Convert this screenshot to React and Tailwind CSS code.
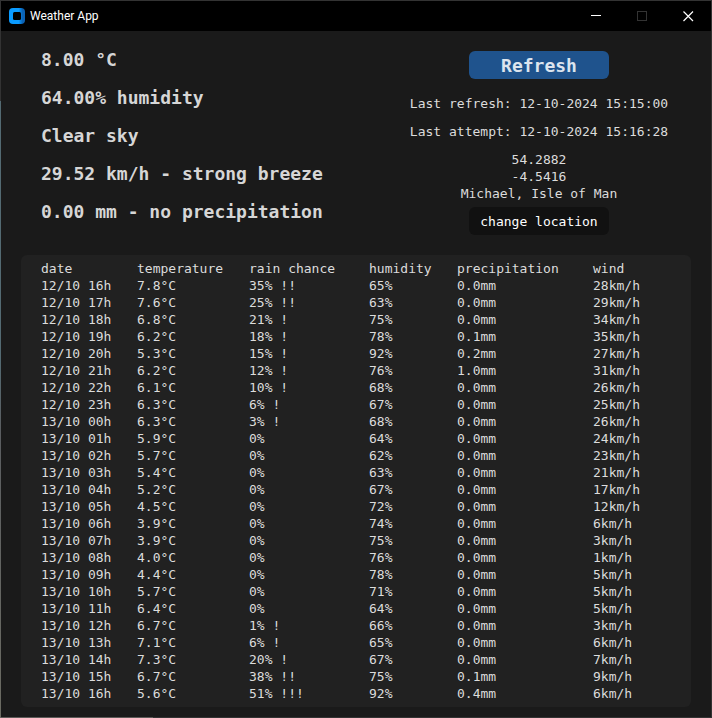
const current = [
  "8.00 °C",
  "64.00% humidity",
  "Clear sky",
  "29.52 km/h - strong breeze",
  "0.00 mm - no precipitation",
];

const columns = [
  { label: "date", width: "w-[96px]" },
  { label: "temperature", width: "w-[112px]" },
  { label: "rain chance", width: "w-[120px]" },
  { label: "humidity", width: "w-[88px]" },
  { label: "precipitation", width: "w-[136px]" },
  { label: "wind", width: "" },
];

const forecast = [
  ["12/10 16h", "7.8°C", "35% !!", "65%", "0.0mm", "28km/h"],
  ["12/10 17h", "7.6°C", "25% !!", "63%", "0.0mm", "29km/h"],
  ["12/10 18h", "6.8°C", "21% !", "75%", "0.0mm", "34km/h"],
  ["12/10 19h", "6.2°C", "18% !", "78%", "0.1mm", "35km/h"],
  ["12/10 20h", "5.3°C", "15% !", "92%", "0.2mm", "27km/h"],
  ["12/10 21h", "6.2°C", "12% !", "76%", "1.0mm", "31km/h"],
  ["12/10 22h", "6.1°C", "10% !", "68%", "0.0mm", "26km/h"],
  ["12/10 23h", "6.3°C", "6% !", "67%", "0.0mm", "25km/h"],
  ["13/10 00h", "6.3°C", "3% !", "68%", "0.0mm", "26km/h"],
  ["13/10 01h", "5.9°C", "0%", "64%", "0.0mm", "24km/h"],
  ["13/10 02h", "5.7°C", "0%", "62%", "0.0mm", "23km/h"],
  ["13/10 03h", "5.4°C", "0%", "63%", "0.0mm", "21km/h"],
  ["13/10 04h", "5.2°C", "0%", "67%", "0.0mm", "17km/h"],
  ["13/10 05h", "4.5°C", "0%", "72%", "0.0mm", "12km/h"],
  ["13/10 06h", "3.9°C", "0%", "74%", "0.0mm", "6km/h"],
  ["13/10 07h", "3.9°C", "0%", "75%", "0.0mm", "3km/h"],
  ["13/10 08h", "4.0°C", "0%", "76%", "0.0mm", "1km/h"],
  ["13/10 09h", "4.4°C", "0%", "78%", "0.0mm", "5km/h"],
  ["13/10 10h", "5.7°C", "0%", "71%", "0.0mm", "5km/h"],
  ["13/10 11h", "6.4°C", "0%", "64%", "0.0mm", "5km/h"],
  ["13/10 12h", "6.7°C", "1% !", "66%", "0.0mm", "3km/h"],
  ["13/10 13h", "7.1°C", "6% !", "65%", "0.0mm", "6km/h"],
  ["13/10 14h", "7.3°C", "20% !", "67%", "0.0mm", "7km/h"],
  ["13/10 15h", "6.7°C", "38% !!", "75%", "0.1mm", "9km/h"],
  ["13/10 16h", "5.6°C", "51% !!!", "92%", "0.4mm", "6km/h"],
];

function TitleBar() {
  return (
    <header className="flex h-[30px] items-center bg-black text-white">
      <svg className="ml-2 h-4 w-4" viewBox="0 0 16 16" aria-hidden="true">
        <defs>
          <linearGradient id="logo-shade" x1="0" x2="1">
            <stop offset="0.6" stopColor="#0a9bff" />
            <stop offset="0.85" stopColor="#0b62b4" />
          </linearGradient>
        </defs>
        <rect width="16" height="16" rx="4" fill="url(#logo-shade)" />
        <rect x="4" y="4" width="8" height="8" rx="1.5" fill="#000" />
      </svg>
      <h1 className="ml-[5px] flex-1 font-[Roboto,sans-serif] text-[12px] leading-4">Weather App</h1>
      <button aria-label="Minimize" className="flex h-full w-[46px] items-center justify-center">
        <svg className="h-[11px] w-[11px]" viewBox="0 0 11 11" shapeRendering="crispEdges">
          <path d="M0 4.500h10" stroke="#fff" />
        </svg>
      </button>
      <button aria-label="Maximize" disabled className="flex h-full w-[46px] items-center justify-center">
        <svg className="h-[11px] w-[11px]" viewBox="0 0 11 11" shapeRendering="crispEdges">
          <path d="M.5.5h9v9h-9z" fill="none" stroke="#333" />
        </svg>
      </button>
      <button aria-label="Close" className="flex h-full w-[46px] items-center justify-center">
        <svg className="h-[11px] w-[11px]" viewBox="0 0 11 11">
          <path d="m.5.5 9.500 9.500m0-9.500-9.500 9.500" stroke="#fff" strokeWidth="1.200" />
        </svg>
      </button>
    </header>
  );
}

export default function App() {
  return (
    <div className="flex min-h-screen bg-[#1a1a1a] font-['DejaVu_Sans_Mono',monospace] text-[13px] leading-[17px]">
      <div className="w-px bg-[linear-gradient(#333_0_14%,#536a72_14%_50%,#5a5d60_60%,#6b6b62)]" />
      <div className="flex flex-1 flex-col border-t border-r border-[#333]">
        <TitleBar />
        <main className="flex flex-1 flex-col gap-5 px-5 pt-[10px] pb-[9px]">
          <section className="flex justify-between">
            <ul className="pl-5 text-[18px] font-bold leading-[38px] text-[#d6d6d6]">
              {current.map((line) => (
                <li key={line}>{line}</li>
              ))}
            </ul>
            <div className="flex w-[304px] flex-col items-center pt-[10px] text-center text-[#dcdcdc]">
              <button className="mb-[11px] h-7 w-[140px] rounded-md bg-[#1f538d] text-[18px] font-bold text-[#dce4ee]">
                Refresh
              </button>
              <p className="leading-7">Last refresh: 12-10-2024 15:15:00</p>
              <p className="leading-7">Last attempt: 12-10-2024 15:16:28</p>
              <address className="mt-[5px] mb-[5px] not-italic">
                54.2882
                <br />
                -4.5416
                <br />
                Michael, Isle of Man
              </address>
              <button className="h-7 w-[140px] rounded-md bg-[#111] text-white">change location</button>
            </div>
          </section>
          <section className="rounded-md bg-[#212121] px-5 py-[5px] text-[#dcdcdc]">
            <table className="w-full table-fixed text-left">
              <thead>
                <tr>
                  {columns.map((c) => (
                    <th key={c.label} scope="col" className={`p-0 font-normal ${c.width}`}>
                      {c.label}
                    </th>
                  ))}
                </tr>
              </thead>
              <tbody>
                {forecast.map((row) => (
                  <tr key={row[0]}>
                    {row.map((cell, i) => (
                      <td key={i} className="p-0">
                        {cell}
                      </td>
                    ))}
                  </tr>
                ))}
              </tbody>
            </table>
          </section>
        </main>
        <footer className="h-px bg-[linear-gradient(90deg,#5c5a58_152px,#333_152px)]" />
      </div>
    </div>
  );
}
